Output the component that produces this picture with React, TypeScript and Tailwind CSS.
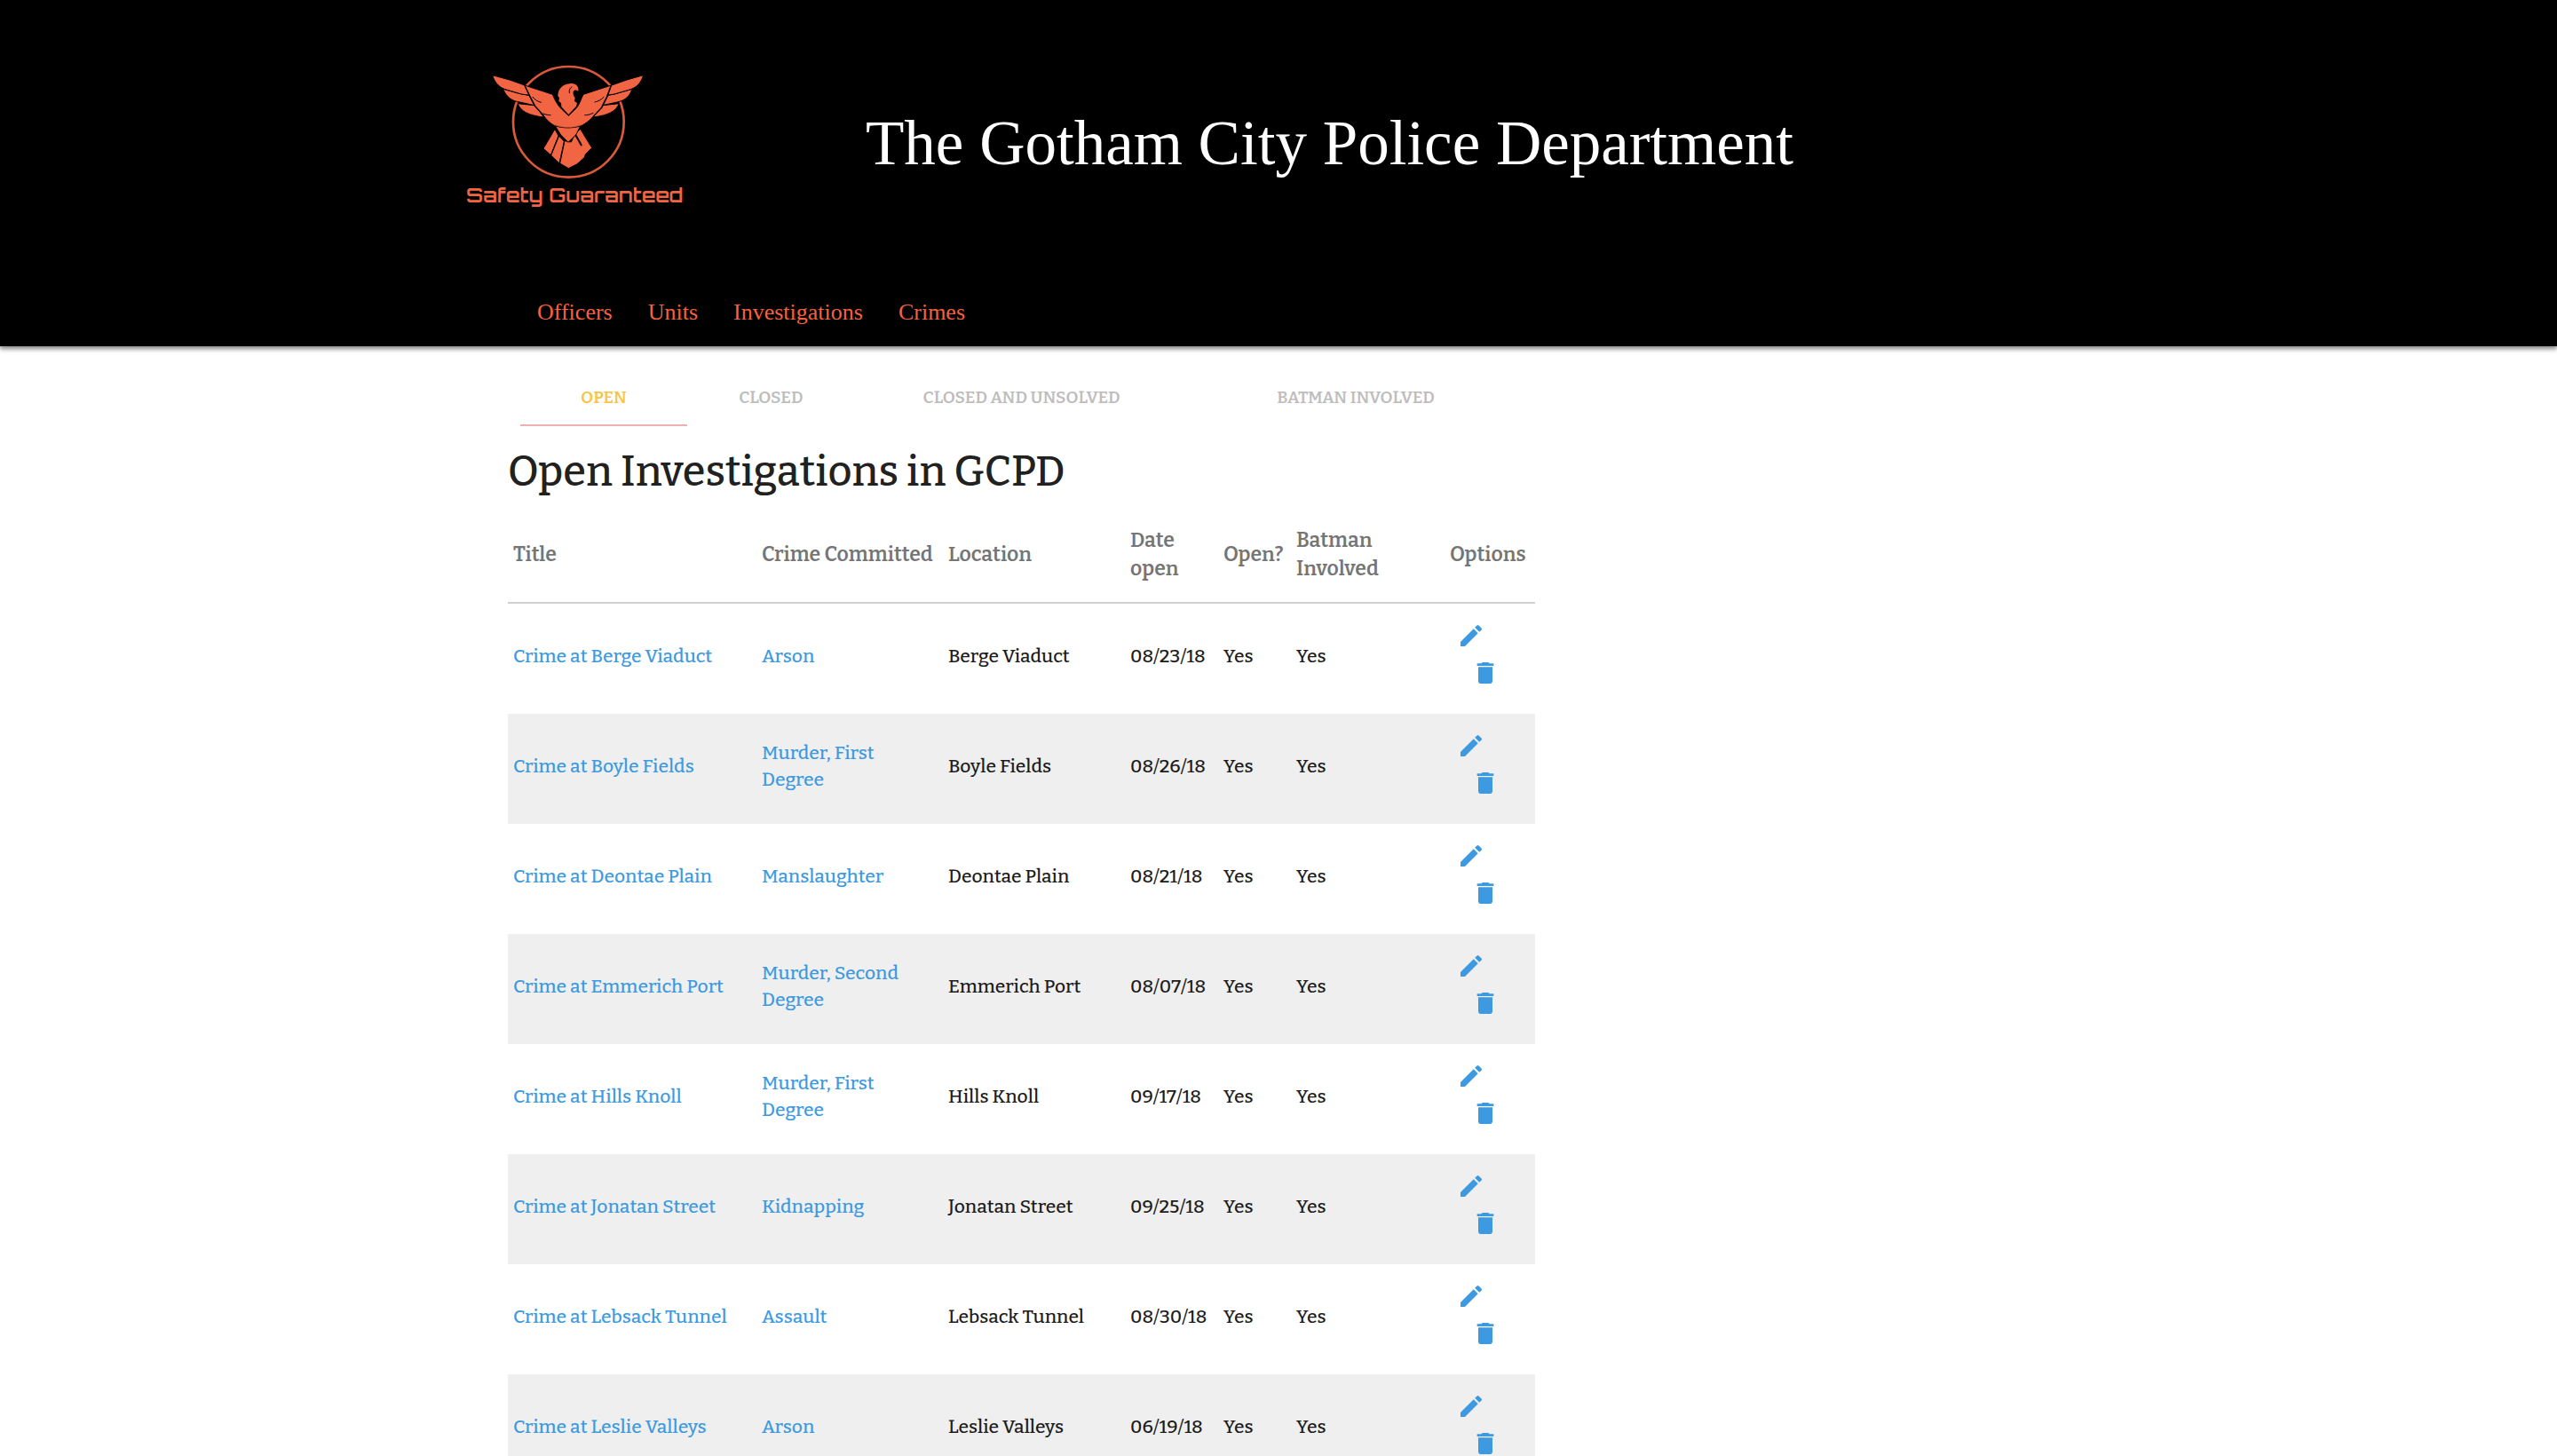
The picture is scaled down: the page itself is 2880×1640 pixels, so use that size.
import { MdDelete, MdModeEdit } from "react-icons/md";

const NAV = ["Officers", "Units", "Investigations", "Crimes"];

const TABS = [
  { label: "Open", span: "col-span-1", active: true },
  { label: "Closed", span: "col-span-1", active: false },
  { label: "Closed and Unsolved", span: "col-span-2", active: false },
  { label: "Batman Involved", span: "col-span-2", active: false },
];

const INVESTIGATIONS = [
  { place: "Berge Viaduct", crime: "Arson", date: "08/23/18" },
  { place: "Boyle Fields", crime: "Murder, First Degree", date: "08/26/18" },
  { place: "Deontae Plain", crime: "Manslaughter", date: "08/21/18" },
  { place: "Emmerich Port", crime: "Murder, Second Degree", date: "08/07/18" },
  { place: "Hills Knoll", crime: "Murder, First Degree", date: "09/17/18" },
  { place: "Jonatan Street", crime: "Kidnapping", date: "09/25/18" },
  { place: "Lebsack Tunnel", crime: "Assault", date: "08/30/18" },
  { place: "Leslie Valleys", crime: "Arson", date: "06/19/18" },
];

function Eagle() {
  return (
    <svg viewBox="75 60 726 402" className="h-[134px] w-[242px]" fill="#f16543" aria-hidden="true">
      <circle cx="421" cy="262" r="187" fill="none" stroke="#d9593b" strokeWidth="8" />
      <g stroke="#000" strokeWidth="3" strokeLinejoin="round">
        {/* outer feathers */}
        <path d="M249 200C260 226 285 240 338 246L306 206Z" />
        <path d="M592 200C581 226 556 240 503 246L536 206Z" />
        <path d="M200 151C212 180 232 192 256 195L306 206L288 172L262 168Z" />
        <path d="M636 151C626 180 608 190 586 195L535 206L553 172L576 168Z" />
        <path d="M164 104C172 132 190 148 214 154L262 168L290 172L276 139L222 120Z" />
        <path d="M674 104C666 132 648 148 624 154L576 168L550 172L564 139L618 120Z" />
        {/* tail */}
        <path d="M375 286L336 352L361 374L387 309Z" />
        <path d="M389 309L362 375L390 402L406 328Z" />
        <path d="M408 326L392 402L421 419L449 405L475 382L479 370L500 350L461 286L442 304L430 330Z" />
        <path d="M370 266L395 306L420 331L446 306L466 266Z" />
        {/* wings */}
        <path d="M272 138L367 169C375 190 386 208 398 219L421 241L444 219C458 206 462 186 471 169L566 138L552 178L534 214L508 240C492 258 478 268 464 275C436 284 404 284 374 275C358 266 346 254 336 240L306 208L288 172Z" />
      </g>
      <path d="M274 141L290 174L308 208L338 242M564 141L550 178L532 214L506 242" fill="none" stroke="#000" strokeWidth="4" />
      {/* head */}
      <path d="M421 237L397 211L396 198L388 192L390 181L385 174C385 150 402 134 428 132C446 130 457 142 454 159C448 153 440 153 437 160C435 170 440 176 443 181L441 192L450 198L447 209Z" />
      <g fill="none" stroke="#000" strokeLinecap="round">
        <path d="M432 144C424 148 423 156 424 164" strokeWidth="3" />
        <path d="M446 308L464 340" strokeWidth="6" />
        <path d="M300 178C308 188 317 193 328 196M336 234C346 238 352 239 360 239M540 178C532 187 522 192 510 195M504 232C494 237 486 239 476 239" strokeWidth="3" />
        <path d="M376 272C404 284 436 284 462 272" stroke="#b94a30" strokeWidth="2" />
      </g>
    </svg>
  );
}

function Header() {
  return (
    <header className="bg-black font-['Liberation_Serif',serif] shadow-[0_4px_5px_rgba(0,0,0,0.25),0_2px_4px_rgba(0,0,0,0.3)]">
      <div className="mx-auto max-w-[1830px] pt-[70px] pb-[18px]">
        <div className="flex items-start gap-[208px]">
          <figure className="flex shrink-0 flex-col items-center gap-0.5">
            <Eagle />
            <figcaption className="h-7 w-[242px] whitespace-nowrap font-['Orbitron','DejaVu_Sans',sans-serif] text-[23px] leading-7 font-semibold text-[#f16543]">
              Safety Guaranteed
            </figcaption>
          </figure>
          <h1 className="mt-[49px] text-[71px] leading-[84px] text-white">The Gotham City Police Department</h1>
        </div>
        <nav className="mt-[98px] ml-20 flex gap-10 text-[26px] leading-10 text-[#f9603d]">
          {NAV.map((item) => (
            <a key={item} href="#">
              {item}
            </a>
          ))}
        </nav>
      </div>
    </header>
  );
}

function Tabs() {
  return (
    <div role="tablist" className="mt-[26px] grid grid-cols-6 px-3.5 text-[19px] font-semibold">
      {TABS.map((tab) => (
        <button
          key={tab.label}
          type="button"
          role="tab"
          aria-selected={tab.active}
          className={`h-16 border-b-2 pt-0.5 uppercase ${tab.span} ${
            tab.active ? "border-[#eeb1b5] text-[#fbc344]" : "border-transparent text-[#bdbdbd]"
          }`}
        >
          {tab.label}
        </button>
      ))}
    </div>
  );
}

function InvestigationTable() {
  return (
    <table className="mt-3 w-full table-fixed border-separate border-spacing-0 text-left text-[21px] leading-[30px] font-medium text-[#1c1c1c]">
      <colgroup>
        <col className="w-[280px]" />
        <col className="w-[210px]" />
        <col className="w-[205px]" />
        <col className="w-[105px]" />
        <col className="w-[82px]" />
        <col className="w-[173px]" />
        <col />
      </colgroup>
      <thead className="text-[23px] leading-8 text-[#757575] [&_th]:border-b-2 [&_th]:border-[#d0d0d0] [&_th]:pt-5 [&_th]:pb-[22px] [&_th]:pl-1.5 [&_th]:font-semibold">
        <tr>
          <th>Title</th>
          <th>Crime Committed</th>
          <th>Location</th>
          <th>
            Date
            <br />
            open
          </th>
          <th>Open?</th>
          <th>
            Batman
            <br />
            Involved
          </th>
          <th>Options</th>
        </tr>
      </thead>
      <tbody className="[&_td]:pb-1.5 [&_td]:pl-1.5">
        {INVESTIGATIONS.map((row) => (
          <tr key={row.place} className="h-[124px] even:bg-[#efefef]">
            <td>
              <a href="#" className="text-[#3d9ae0]">
                Crime at {row.place}
              </a>
            </td>
            <td className="pr-6">
              <a href="#" className="text-[#3d9ae0]">
                {row.crime}
              </a>
            </td>
            <td>{row.place}</td>
            <td>{row.date}</td>
            <td>Yes</td>
            <td>Yes</td>
            <td>
              <div className="flex flex-col items-start gap-2.5 pb-1 pl-2 text-[32px] text-[#3d9ae0]">
                <a href="#" aria-label={`Edit crime at ${row.place}`}>
                  <MdModeEdit />
                </a>
                <a href="#" aria-label={`Delete crime at ${row.place}`} className="ml-4">
                  <MdDelete />
                </a>
              </div>
            </td>
          </tr>
        ))}
      </tbody>
    </table>
  );
}

export default function App() {
  return (
    <div className="min-h-screen bg-white font-['Bitter','DejaVu_Serif_Condensed',serif]">
      <Header />
      <div className="mx-auto max-w-[1736px]">
        <main className="w-8/12">
          <Tabs />
          <h2 className="mt-[22px] text-[47px] leading-[58px] font-medium text-[#212121]">
            Open Investigations in GCPD
          </h2>
          <InvestigationTable />
        </main>
      </div>
    </div>
  );
}
